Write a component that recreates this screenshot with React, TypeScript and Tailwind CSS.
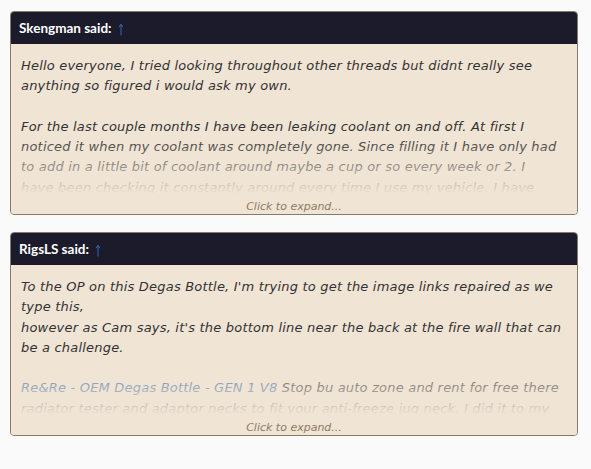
import React from "react";

const UpArrow = () => (
  <svg width="6" height="13" viewBox="0 0 6 13" className="ml-[6px] mt-[2px]">
    <path d="M3 12.5V1.5M1 4.2L3 1.2L5 4.2" stroke="#2f68b4" strokeWidth="1" fill="none" />
  </svg>
);

const Quote = ({ author, children }: { author: string; children: React.ReactNode }) => {
  return (
    <div className="rounded-[4px] border border-[#867b6b] bg-[#f0e4d5] overflow-hidden">
      <div className="h-[32px] bg-[#1b1b2b] px-[8px] flex items-center text-[13.5px] font-bold text-white font-['Lato',sans-serif]">
        {author} said:
        <UpArrow />
      </div>
      <div className="relative h-[170px] px-[10px] pt-[12px]">
        <div className="w-[540.7px] max-h-[142px] overflow-hidden italic text-[13px] leading-[20.3px] tracking-[0.2px] text-[#333]">
          {children}
        </div>
        <div className="absolute inset-x-0 bottom-0 h-[78px] bg-[linear-gradient(to_bottom,rgba(240,228,213,0)_0%,#f0e4d5_75%)] flex items-end justify-center pb-0 text-[11px] leading-[14px] italic text-[#8d7c63]">
          Click to expand...
        </div>
      </div>
    </div>
  );
};

const App = () => {
  return (
    <div className="min-h-screen bg-[#fafafa] pt-[11px] pl-[10px] pr-[13px] flex flex-col gap-[17px] font-['DejaVu_Sans',sans-serif]">
      <Quote author="Skengman">
        Hello everyone, I tried looking throughout other threads but didnt really see anything so figured i would ask my own.
        <br />
        <br />
        For the last couple months I have been leaking coolant on and off. At first I noticed it when my coolant was completely gone. Since filling it I have only had to add in a little bit of coolant around maybe a cup or so every week or 2. I have been checking it constantly around every time I use my vehicle. I have been noticing it more lately.
      </Quote>
      <Quote author="RigsLS">
        To the OP on this Degas Bottle, I'm trying to get the image links repaired as we type this,
        <br />
        however as Cam says, it's the bottom line near the back at the fire wall that can be a challenge.
        <br />
        <br />
        <span className="text-[#3f6ea8]">Re&amp;Re - OEM Degas Bottle - GEN 1 V8</span> Stop bu auto zone and rent for free there radiator tester and adaptor necks to fit your anti-freeze jug neck. I did it to my own truck and found the leak in minutes.
      </Quote>
    </div>
  );
};

export default App;
